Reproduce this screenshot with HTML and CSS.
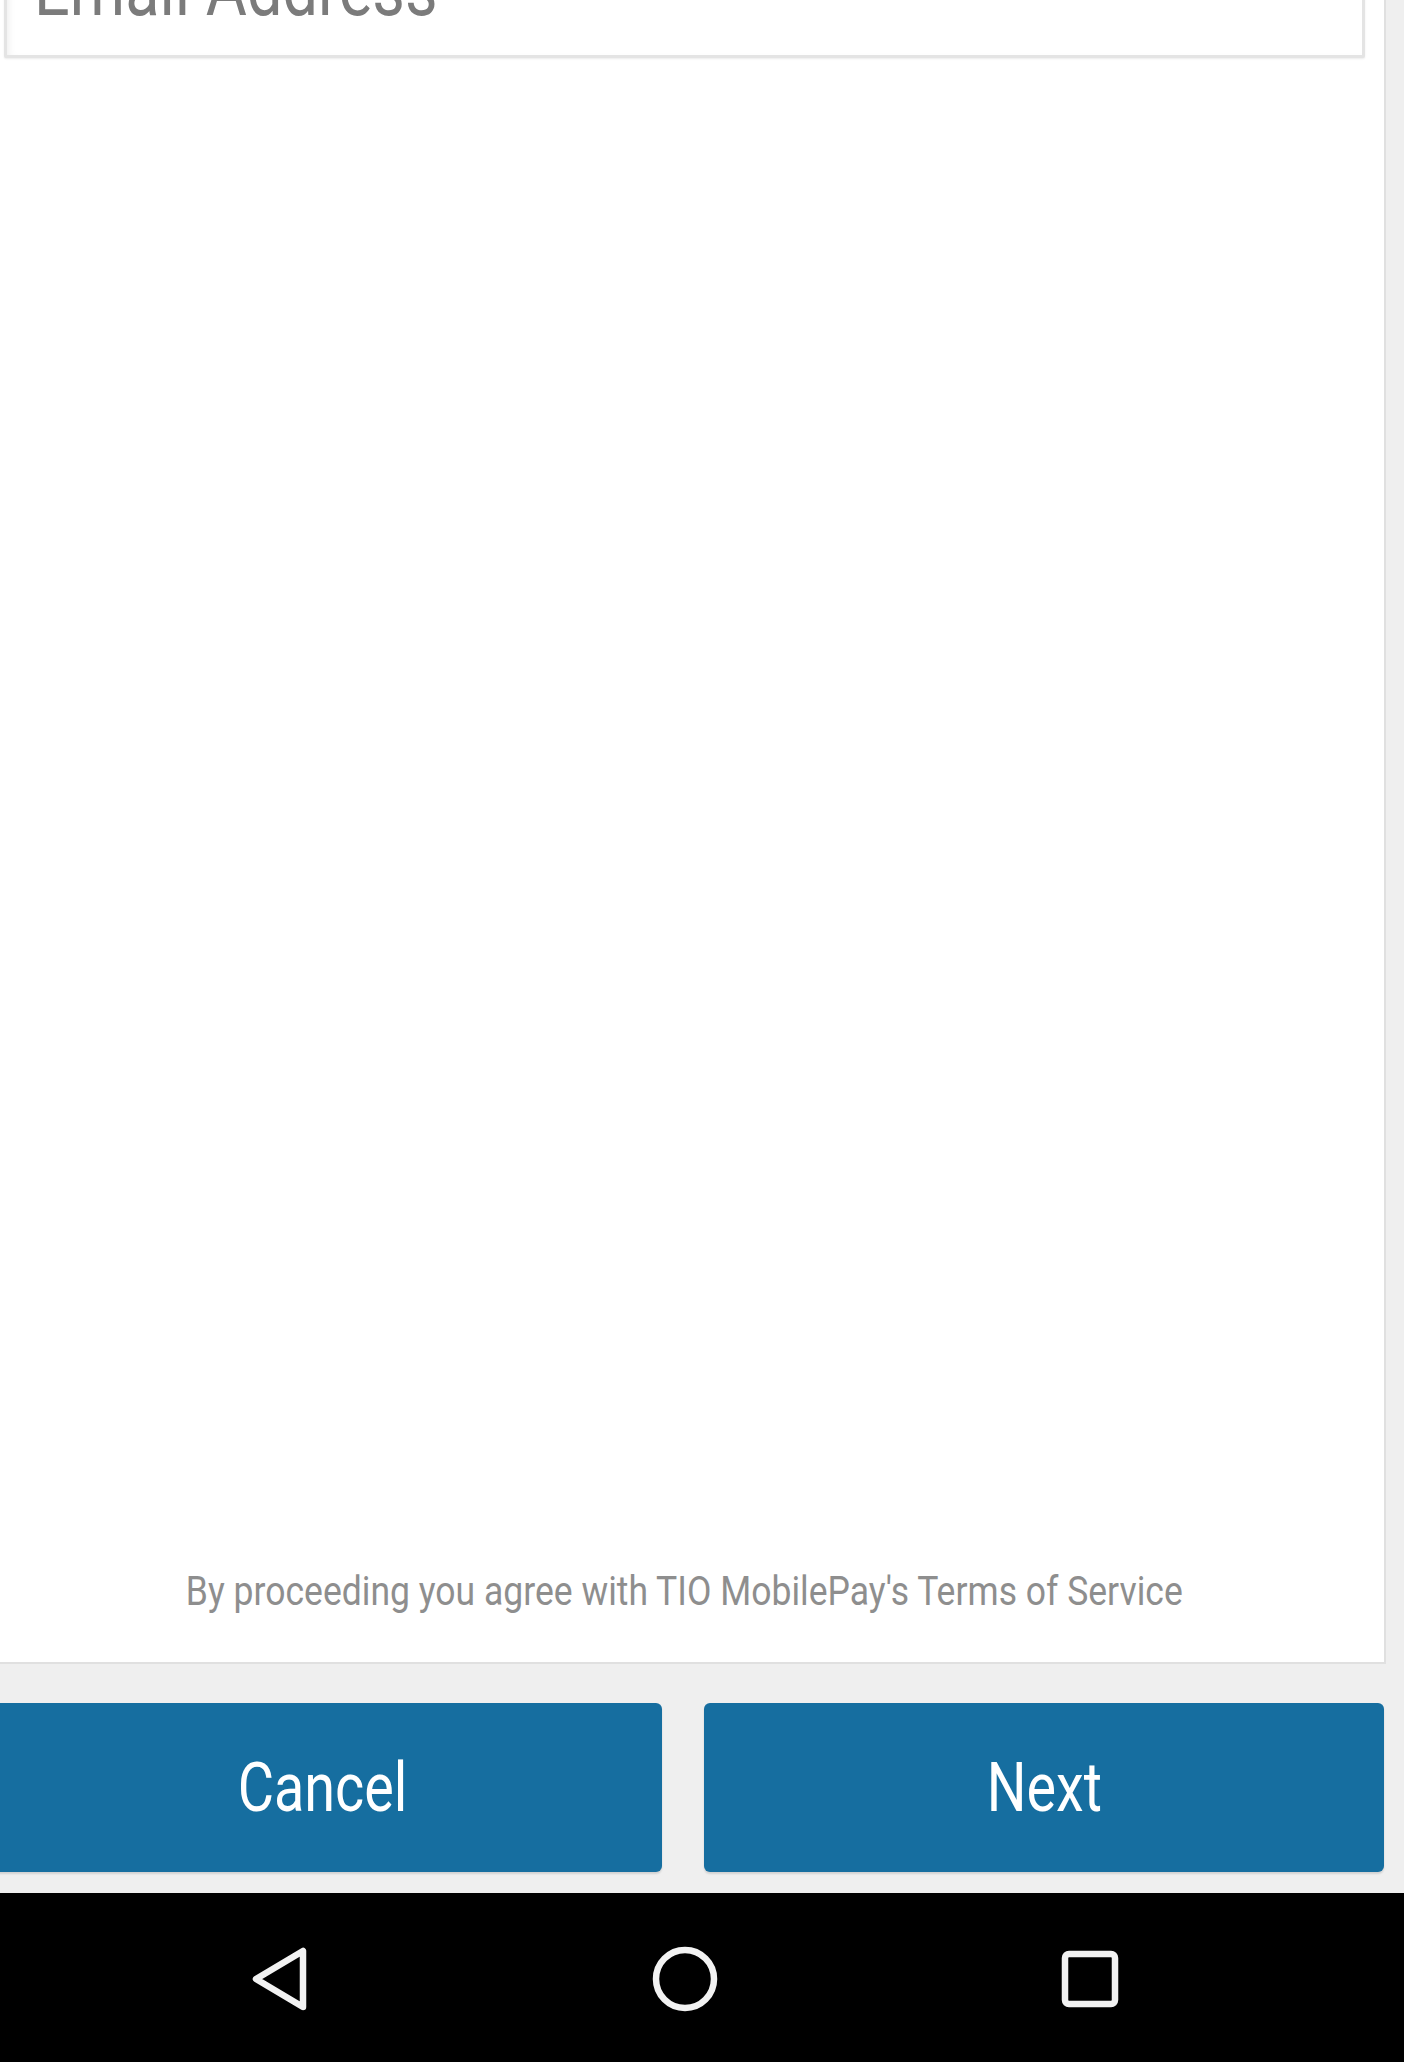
FILE: index.html
```html
<!DOCTYPE html>
<html>
<head>
<meta charset="utf-8">
<link rel="stylesheet" href="styles.css">
</head>
<body>
<div class="screen">
  <div class="card">
    <div class="field"><span class="placeholder">Email Address</span></div>
    <div class="spacer"></div>
    <div class="terms"><span class="terms-text">By proceeding you agree with TIO MobilePay's Terms of Service</span></div>
  </div>
  <div class="actions">
    <button class="btn"><span class="btn-text">Cancel</span></button>
    <button class="btn"><span class="btn-text">Next</span></button>
  </div>
  <div class="navbar">
    <div class="slot">
      <svg width="64" height="72" viewBox="0 0 64 72"><polygon points="8,36 55,8 55,64" fill="none" stroke="#f2f2f2" stroke-width="6.5" stroke-linejoin="round"/></svg>
    </div>
    <div class="slot">
      <svg width="72" height="72" viewBox="0 0 72 72"><circle cx="36" cy="36" r="29" fill="none" stroke="#f2f2f2" stroke-width="6.5"/></svg>
    </div>
    <div class="slot">
      <svg width="64" height="64" viewBox="0 0 64 64"><rect x="7" y="7" width="50" height="50" rx="4" fill="none" stroke="#f2f2f2" stroke-width="6.5"/></svg>
    </div>
  </div>
</div>
</body>
</html>
```
FILE: styles.css
```css
html, body {
  margin: 0;
  padding: 0;
}
body {
  width: 1404px;
  height: 2062px;
  overflow: hidden;
  background: #efefef;
  font-family: Roboto, "Liberation Sans", Arial, sans-serif;
}
.screen {
  display: flex;
  flex-direction: column;
  height: 2062px;
}
.card {
  height: 1664px;
  box-sizing: border-box;
  margin-left: -10px;
  margin-right: 18px;
  background: #ffffff;
  border-right: 2px solid #e0e0e0;
  border-bottom: 2px solid #e0e0e0;
  display: flex;
  flex-direction: column;
}
.field {
  margin-top: -82px;
  margin-left: 14px;
  margin-right: 19px;
  height: 140px;
  box-sizing: border-box;
  border: 3px solid #e4e4e4;
  border-radius: 2px;
  background: #ffffff;
  box-shadow: inset 6px 0 10px -6px #e8e8e8, 0 1px 2px #ececec;
  display: flex;
  align-items: flex-end;
  padding-left: 27px;
  padding-bottom: 28px;
  overflow: hidden;
}
.placeholder {
  display: inline-block;
  font-size: 76px;
  line-height: 76px;
  color: #7b7b7b;
  transform: scaleX(0.83);
  transform-origin: left center;
  white-space: nowrap;
}
.spacer {
  flex: 1;
}
.terms {
  display: flex;
  justify-content: center;
  padding-bottom: 46px;
  padding-right: 6px;
}
.terms-text {
  display: inline-block;
  font-size: 40px;
  line-height: 48px;
  color: #8e8e8e;
  white-space: nowrap;
  transform: scaleX(0.888);
}
.actions {
  display: flex;
  gap: 42px;
  margin-top: 39px;
  margin-left: -18px;
  margin-right: 20px;
}
.btn {
  flex: 1;
  height: 169px;
  border: none;
  border-radius: 6px;
  background: #166ea0;
  color: #ffffff;
  padding: 0;
  font-family: inherit;
  display: flex;
  align-items: center;
  justify-content: center;
  box-shadow: 0 2px 2px rgba(0,0,0,0.12);
}
.btn-text {
  display: inline-block;
  font-size: 68px;
  line-height: 68px;
  transform: scaleX(0.82);
}
.navbar {
  margin-top: auto;
  height: 169px;
  background: #000000;
  display: flex;
  align-items: center;
  padding-left: 77px;
  padding-top: 2px;
  box-sizing: border-box;
}
.slot {
  width: 405px;
  display: flex;
  justify-content: center;
  align-items: center;
}
```
